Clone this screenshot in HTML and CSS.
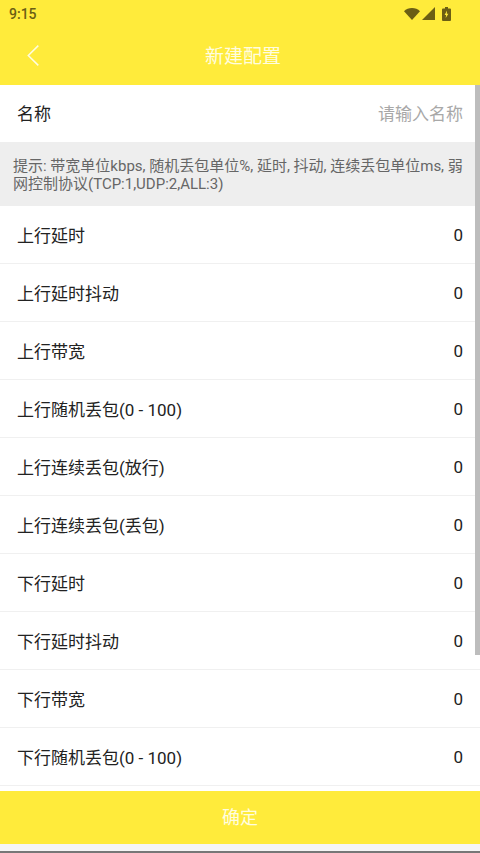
FILE: index.html
```html
<!DOCTYPE html>
<html lang="zh-CN">
  <head>
    <meta charset="UTF-8">
    <meta name="viewport" content="width=device-width, initial-scale=1.0">
    <title>新建配置</title>
    <link rel="stylesheet" href="styles.css">
  </head>
  <body>
    <div class="app">
      <div class="header">
        <div class="statusbar">
          <span class="time">9:15</span>
          <div class="status-icons">
            <svg class="wifi" width="16" height="12" viewBox="0 0 17 12" preserveAspectRatio="none"><path d="M0 3.200C2.200 1.200 5.200 0 8.500 0s6.300 1.200 8.500 3.200L8.500 12z" fill="#6b5e14"/></svg>
            <svg class="signal" width="13" height="13" viewBox="0 0 13 13"><path d="M13 0v13H0z" fill="#6b5e14"/></svg>
            <svg class="battery" width="9" height="14" viewBox="0 0 9 14"><path d="M3 0h3v1.500h2a1 1 0 0 1 1 1V13a1 1 0 0 1-1 1H1a1 1 0 0 1-1-1V2.500a1 1 0 0 1 1-1h2z" fill="#6b5e14"/><path d="M5 3.500 2.600 8h1.500L3.700 11 6.400 6.700H4.800z" fill="#ffeb3b"/></svg>
          </div>
        </div>
        <div class="titlebar">
          <svg class="back" width="12" height="21" viewBox="0 0 12 21"><path d="M11.300 .6 1.300 10.500l10 9.900" fill="none" stroke="#fffde0" stroke-width="1.500"/></svg>
          <span class="title">新建配置</span>
        </div>
      </div>

      <div class="content">
        <div class="scrollbar"></div>
        <div class="row name-row">
          <span>名称</span>
          <span class="placeholder">请输入名称</span>
        </div>
        <div class="tip">提示: 带宽单位kbps, 随机丢包单位%, 延时, 抖动, 连续丢包单位ms, 弱网控制协议(TCP:1,UDP:2,ALL:3)</div>
        <div class="row"><span>上行延时</span><span>0</span></div>
        <div class="row"><span>上行延时抖动</span><span>0</span></div>
        <div class="row"><span>上行带宽</span><span>0</span></div>
        <div class="row"><span>上行随机丢包(0 - 100)</span><span>0</span></div>
        <div class="row"><span>上行连续丢包(放行)</span><span>0</span></div>
        <div class="row"><span>上行连续丢包(丢包)</span><span>0</span></div>
        <div class="row"><span>下行延时</span><span>0</span></div>
        <div class="row"><span>下行延时抖动</span><span>0</span></div>
        <div class="row"><span>下行带宽</span><span>0</span></div>
        <div class="row"><span>下行随机丢包(0 - 100)</span><span>0</span></div>
      </div>

      <div class="confirm">确定</div>
      <div class="navline"></div>
    </div>
  </body>
</html>
```

FILE: styles.css
```css
body {
  margin: 0;
  background: #f5f5f5;
  font-family: Roboto, "Noto Sans CJK SC", sans-serif;
}

.app {
  width: 480px;
  height: 853px;
  display: flex;
  flex-direction: column;
  overflow: hidden;
}

/* --------------- header ----------------- */

.header {
  height: 85px;
  flex: none;
  background: #ffeb3b;
}

.statusbar {
  height: 27px;
  padding: 0 29px 0 9px;
  display: flex;
  justify-content: space-between;
  align-items: center;
}

.time {
  font-size: 14px;
  font-weight: 500;
  color: #6b5e14;
}

.status-icons {
  display: flex;
  align-items: center;
}

.signal {
  margin-left: 2px;
}

.battery {
  margin-left: 7px;
}

.titlebar {
  height: 58px;
  position: relative;
  padding-left: 6px;
  padding-bottom: 4px;
  box-sizing: border-box;
  display: flex;
  justify-content: center;
  align-items: center;
}

.back {
  position: absolute;
  left: 27px;
  top: 18px;
}

.title {
  font-size: 19px;
  color: #fffde0;
}

/* --------------- list ----------------- */

.content {
  height: 706px;
  flex: none;
  position: relative;
  background: #fff;
  overflow: hidden;
}

.scrollbar {
  position: absolute;
  top: 0;
  right: 0;
  width: 5px;
  height: 570px;
  background: #bdbdbd;
}

.row {
  height: 58px;
  box-sizing: border-box;
  padding: 0 17px;
  display: flex;
  justify-content: space-between;
  align-items: center;
  border-bottom: 1px solid #f0f0f0;
  font-size: 17px;
  color: #222;
}

.name-row {
  height: 57px;
  padding-bottom: 2px;
  border-bottom: none;
}

.placeholder {
  color: #a8a8a8;
}

.tip {
  height: 64px;
  box-sizing: border-box;
  padding: 15px 13px 0;
  background: #eeeeee;
  font-size: 15px;
  line-height: 18px;
  color: #666;
}

/* --------------- button ----------------- */

.confirm {
  height: 53px;
  flex: none;
  padding-bottom: 3px;
  box-sizing: border-box;
  background: #ffeb3b;
  color: #fffde0;
  font-size: 18px;
  display: flex;
  justify-content: center;
  align-items: center;
}

.navline {
  height: 2px;
  margin-top: 7px;
  flex: none;
  background: #777;
}
```
